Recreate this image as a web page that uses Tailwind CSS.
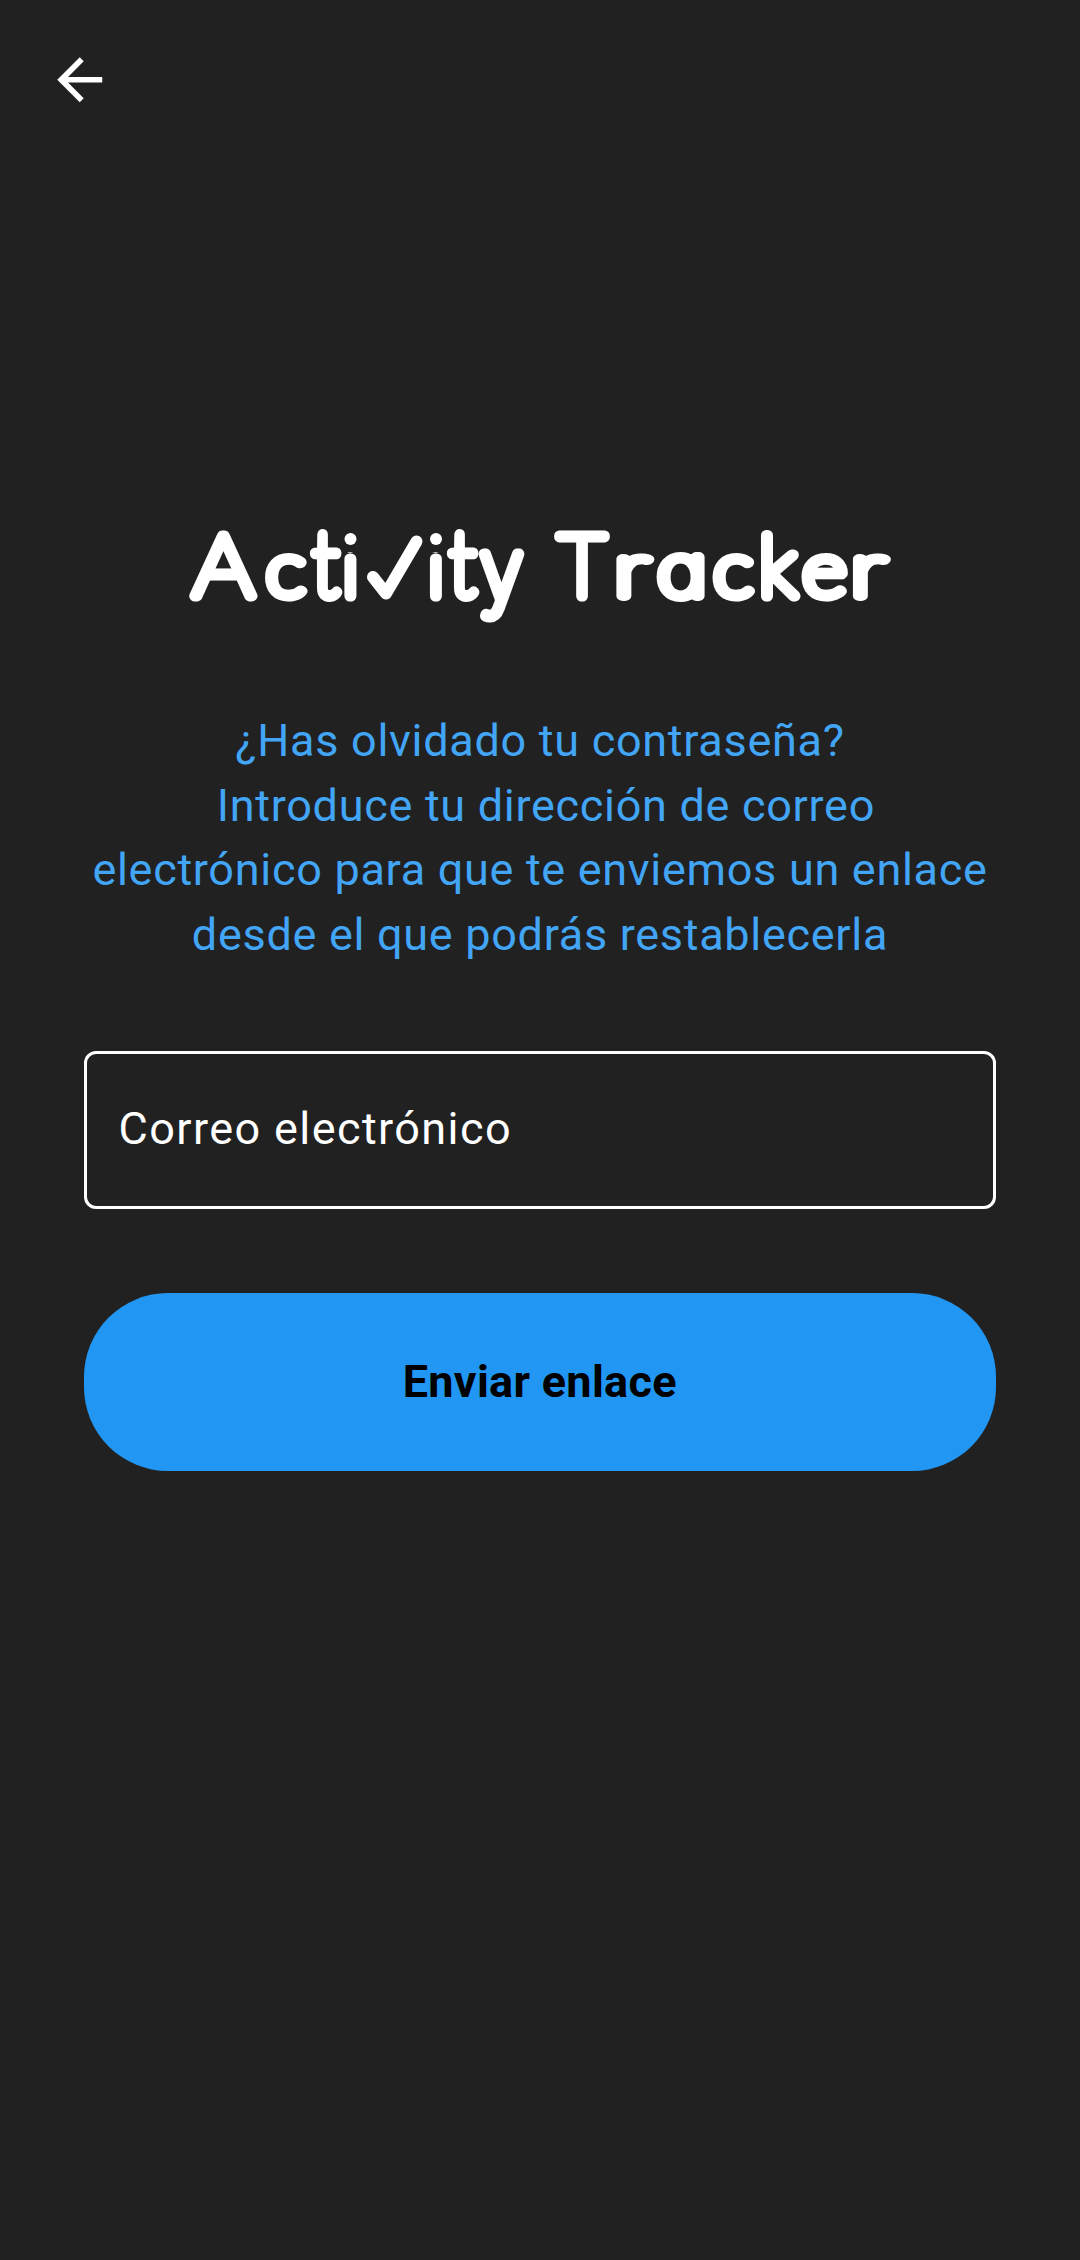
<!DOCTYPE html>
<html lang="es">
<head>
<meta charset="utf-8">
<title>Activity Tracker</title>
<script src="https://cdn.jsdelivr.net/npm/@tailwindcss/browser@4"></script>
</head>
<body class="bg-[#212121]">
<main class="flex h-[2260px] w-[1080px] flex-col overflow-hidden bg-[#212121] px-[84px] font-['Roboto',sans-serif]">
  <header class="-ml-[38.5px] flex h-[510px] shrink-0 items-start pt-[45.5px]">
    <button aria-label="Volver" class="block">
      <svg class="block size-[67.5px]" viewBox="0 0 24 24" fill="#fff"><path d="M20 11H7.83l5.59-5.59L12 4l-8 8 8 8 1.41-1.41L7.83 13H20v-2z"/></svg>
    </button>
  </header>
  <!-- Wordmark: hairline letters with a thick round stroke; the v is a check mark -->
  <h1 class="h-[199px] shrink-0">
    <svg class="block h-[130px] w-[912px] font-['Lato',sans-serif] font-thin" viewBox="84 510 912 130" fill="#fff" stroke="#fff" stroke-width="11" stroke-linejoin="round" stroke-linecap="round" text-anchor="middle">
      <!-- both i letters, with solid round dots set above the stems -->
      <text transform="translate(350.5 595.5)" font-size="76">i</text>
      <text transform="translate(436 595.5)" font-size="76">i</text>
      <path d="M342 530h17v22h-17zM427.500 530h17v22h-17z" fill="#212121" stroke="none"/>
      <circle cx="350.5" cy="539" r="6" stroke="none"/>
      <circle cx="436" cy="539" r="6" stroke="none"/>
      <text transform="translate(223.5 595.5) scale(1.1 1)" font-size="86">A</text>
      <text transform="translate(285.5 595.5) scale(1.1 1)" font-size="76">c</text>
      <text transform="translate(325.5 595.5) scale(0.9 1)" font-size="90">t</text>
      <path d="M373 577L386 593.500L416.500 541.500" fill="none" stroke-width="12"/>
      <text transform="translate(462.500 595.5) scale(0.9 1)" font-size="90">t</text>
      <text class="font-['Inter']" transform="translate(501.5 600) scale(1.04 1.1)" font-size="76" stroke-width="10">y</text>
      <text transform="translate(582 595.5) scale(0.97 1)" font-size="86">T</text>
      <text transform="translate(631.500 595.5) scale(1.36 1)" font-size="76" stroke-width="10">r</text>
      <text class="font-['Inter'] [font-feature-settings:'cv11']" transform="translate(682 595.5) scale(1.2 1)" font-size="71" stroke-width="10">a</text>
      <text transform="translate(733 595.5) scale(1.1 1)" font-size="76">c</text>
      <text transform="translate(777.500 595.5)" font-size="84">k</text>
      <text transform="translate(824.500 595.5) scale(1.12 1)" font-size="76">e</text>
      <text transform="translate(868 595.5) scale(1.36 1)" font-size="76" stroke-width="10">r</text>
    </svg>
  </h1>
  <p class="shrink-0 text-center text-[45px] leading-[64.6875px] tracking-[0.703125px] text-[#42a5f5]">¿Has olvidado tu contraseña?<br>&nbsp;Introduce tu dirección de correo<br>electrónico para que te enviemos un enlace<br>desde el que podrás restablecerla</p>
  <div class="mt-[83.25px] flex h-[158px] w-[911.500px] shrink-0 items-center rounded-[12px] border-[3px] border-white pb-[2px] pl-[31.500px] text-[45px] tracking-[1.40625px] text-white">Correo electrónico</div>
  <button class="mt-[84px] flex h-[177.500px] w-[911.500px] shrink-0 items-center justify-center rounded-[84px] bg-[#2196f3] text-[45px] font-bold tracking-[0.3px] text-black">Enviar enlace</button>
</main>
</body>
</html>
